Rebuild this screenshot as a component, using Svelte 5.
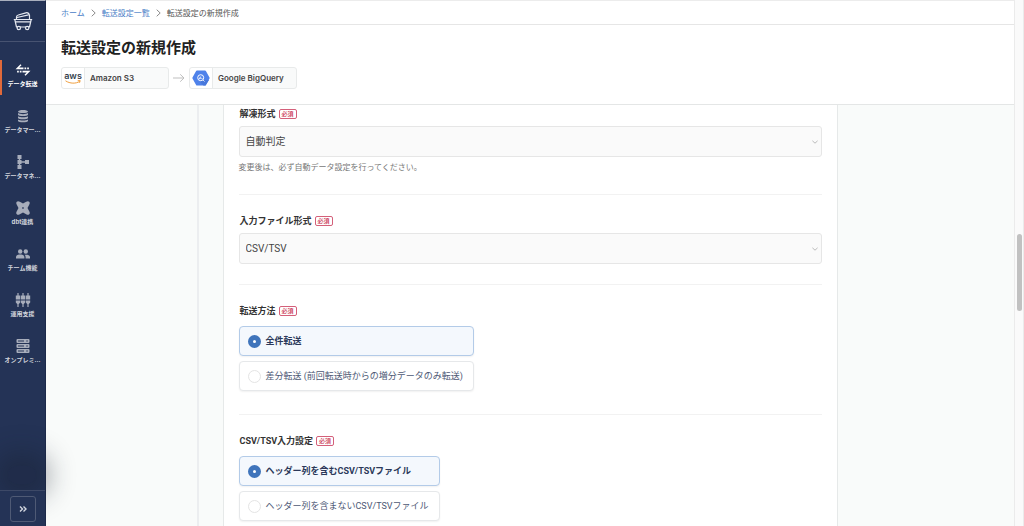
<script lang="ts">
	const navItems = [
		{ id: "transfer", label: "データ転送" },
		{ id: "mart", label: "データマート" },
		{ id: "manage", label: "データマネジメント" },
		{ id: "dbt", label: "dbt連携" },
		{ id: "team", label: "チーム機能" },
		{ id: "ops", label: "運用支援" },
		{ id: "onprem", label: "オンプレミス" },
	];

	const transferModes = [
		{ value: "full", label: "全件転送" },
		{ value: "diff", label: "差分転送 (前回転送時からの増分データのみ転送)" },
	];

	const headerModes = [
		{ value: "with", label: "ヘッダー列を含むCSV/TSVファイル" },
		{ value: "without", label: "ヘッダー列を含まないCSV/TSVファイル" },
	];

	let current = $state("transfer");
	let unzip = $state("自動判定");
	let fileType = $state("CSV/TSV");
	let transferMode = $state("full");
	let headerMode = $state("with");

	const scroll = { top: 44.5, size: 14.6 };

	// long labels are cut to five characters
	const shorten = (text: string) => (text.length > 5 && !text.startsWith("dbt") ? text.slice(0, 5) + "..." : text);
</script>

{#snippet required()}
	<span class="required">必須</span>
{/snippet}

{#snippet chevron()}
	<svg class="chevron" viewBox="0 0 8 8" aria-hidden="true"><path d="M1.4 2.8 4 5.2l2.6-2.4" /></svg>
{/snippet}

{#snippet crumb()}
	<svg class="crumb" viewBox="0 0 5 8" aria-hidden="true"><path d="M.7.7 4.2 4 .7 7.3" /></svg>
{/snippet}

<div class="app">
	<aside class="sidebar">
		<a class="logo" href="#home" aria-label="ホーム">
			<svg viewBox="0 0 20 20" fill="none" stroke="#e6e9f0" stroke-width="1.2" stroke-linejoin="round">
				<path d="M.8 8.500h18.400M1.800 8.500 3.500 16h13l1.700-7.500M2.500 10.800h15" />
				<path d="M3.500 8.200V6c0-1 .8-1.800 1.800-2l7.500-2.200c2-.5 3.200.7 3.700 2.700v3.700M4 6.500l11.500-2.700" />
				<circle cx="5.800" cy="17" r="1.700" fill="#243356" />
				<circle cx="14.200" cy="17" r="1.700" fill="#243356" />
			</svg>
		</a>

		<nav>
			{#each navItems as item (item.id)}
				<a class="item" class:active={current === item.id} href="#{item.id}" title={item.label} onclick={() => (current = item.id)}>
					<svg viewBox="0 0 16 14" fill="currentColor">
						{#if item.id === "transfer"}
							<path d="M.5 6.200 5.500 1.200l1 1L4.200 4.600h4.300v1.600zM9.500 4.600h1.700v1.600H9.500zM12.200 4.600h1.700v1.600h-1.700zM15.500 7.800l-5 5-1-1 2.300-2.400H7.500V7.800zM4.800 7.800h1.700v1.600H4.800zM2.100 7.800h1.700v1.600H2.100z" />
						{:else if item.id === "mart"}
							<path d="M3 2.500C3 .4 13 .4 13 2.500S3 4.600 3 2.500zM3 4c2 1.500 8 1.500 10 0v1.700c0 1.700-10 1.700-10 0zM3 7.200c2 1.500 8 1.500 10 0v1.700c0 1.700-10 1.700-10 0zM3 10.400c2 1.500 8 1.500 10 0v1.500c0 1.900-10 1.900-10 0z" />
						{:else if item.id === "manage"}
							<path d="M2.500 0h4v4H5.200v1h1.300v1.300H10V5h4v4h-4V7.700H6.500V9H5.200v1h1.300v4h-4v-4h1.300V9H2.500V5h1.300V4H2.500z" />
						{:else if item.id === "dbt"}
							<path fill-rule="evenodd" d="M1.800.7C2.700-.2 3.800.1 4.800.7L8 2.500 11.200.7c1-.6 2.100-.9 3 0s.6 2 0 3L12.500 7l1.700 3.300c.6 1 .9 2.100 0 3s-2 .6-3 0L8 11.500l-3.200 1.800c-1 .6-2.100.9-3 0s-.6-2 0-3L3.500 7 1.800 3.700c-.6-1-.9-2.100 0-3zM8 5.900 6.900 7 8 8.100 9.100 7z" />
						{:else if item.id === "team"}
							<circle cx="5.200" cy="4.500" r="2.200" />
							<circle cx="10.800" cy="4.500" r="2.200" />
							<path d="M1 11.500V10c0-1.800 2.500-2.400 4.200-2.400S9.400 8.200 9.400 10v1.500zM10.600 11.500V10c0-.9-.4-1.600-1-2.200 2.200-.5 5.400.2 5.400 2.200v1.500z" />
						{:else if item.id === "ops"}
							{#each [3, 8, 13] as x}
								<path transform="translate({x} 0)" d="M-.6 0H.6v2.500h1.600v4h-4.400v-4h1.600zM-2.200 7.500h4.400v2L.6 11.300V14H-.6v-2.700l-1.600-1.800z" />
							{/each}
						{:else}
							{#each [0, 5, 10] as y}
								<path transform="translate(0 {y})" fill-rule="evenodd" d="M2.500 0h11a1 1 0 0 1 1 1v2a1 1 0 0 1-1 1h-11a1 1 0 0 1-1-1V1a1 1 0 0 1 1-1zM3 1.400v1.200h6V1.400zM11.300 1.400v1.200h1.500V1.400z" />
							{/each}
						{/if}
					</svg>
					<span>{shorten(item.label)}</span>
				</a>
			{/each}
		</nav>

		<div class="glow"></div>

		<div class="foot">
			<button type="button" aria-label="メニューを開く">
				<svg viewBox="0 0 8 8" fill="none" stroke="#d3d7e0" stroke-width="1.400"><path d="M1 1.500 3.500 4 1 6.500M4.500 1.500 7 4 4.500 6.500" /></svg>
			</button>
		</div>
	</aside>

	<main>
		<header>
			<div class="crumbs">
				<a href="#home">ホーム</a>
				{@render crumb()}
				<a href="#list">転送設定一覧</a>
				{@render crumb()}
				<span>転送設定の新規作成</span>
			</div>

			<div class="heading">
				<h1>転送設定の新規作成</h1>
				<div class="route">
					<div class="chip">
						<div class="brand">
							<svg class="aws" viewBox="0 0 18 14">
								<text x="9" y="8">aws</text>
								<path d="M1.500 9.800c4.500 3 10.500 3 14.200.6M13.700 9.700l2.500-.1-.7 2.200" fill="none" stroke="#f0a040" stroke-width="1" />
							</svg>
						</div>
						<span>Amazon S3</span>
					</div>
					<svg class="arrow" viewBox="0 0 12 10" fill="none" stroke="#bfbfbf"><path d="M0 5h11M7.200 1.300 11 5 7.200 8.700" /></svg>
					<div class="chip">
						<div class="brand">
							<svg class="bq" viewBox="0 0 18 16">
								<path d="M5 .5h8a1 1 0 0 1 .9.500l3.600 6.500a1 1 0 0 1 0 1L13.900 15a1 1 0 0 1-.9.500H5a1 1 0 0 1-.9-.5L.5 8.500a1 1 0 0 1 0-1L4.100 1A1 1 0 0 1 5 .5z" fill="#4f82ea" />
								<path d="m11 10 6 0-3.100 5a1 1 0 0 1-.9.500h-1.500L8 12z" fill="#4878dc" />
								<circle cx="8.700" cy="7.700" r="3" fill="none" stroke="#fff" />
								<path d="m11 10 1.500 1.500M7.500 7.500V9M8.700 6.500V9M9.900 8v1" fill="none" stroke="#fff" stroke-width=".8" />
							</svg>
						</div>
						<span>Google BigQuery</span>
					</div>
				</div>
			</div>
		</header>

		<div class="body">
			<div class="steps"></div>

			<form class="panel">
				<section>
					<div class="title"><label for="unzip">解凍形式</label>{@render required()}</div>
					<div class="select">
						<select id="unzip" bind:value={unzip}>
							<option>自動判定</option>
						</select>
						{@render chevron()}
					</div>
					<p class="help">変更後は、必ず自動データ設定を行ってください。</p>
				</section>

				<section>
					<div class="title"><label for="file-type">入力ファイル形式</label>{@render required()}</div>
					<div class="select">
						<select id="file-type" bind:value={fileType}>
							<option>CSV/TSV</option>
						</select>
						{@render chevron()}
					</div>
				</section>

				<section>
					<div class="title" id="mode-title">転送方法{@render required()}</div>
					<div class="radios" role="radiogroup" aria-labelledby="mode-title">
						{#each transferModes as mode}
							<label class="radio">
								<input type="radio" name="mode" value={mode.value} bind:group={transferMode}>
								<span>{mode.label}</span>
							</label>
						{/each}
					</div>
				</section>

				<section>
					<div class="title" id="header-title">CSV/TSV入力設定{@render required()}</div>
					<div class="radios" role="radiogroup" aria-labelledby="header-title">
						{#each headerModes as mode}
							<label class="radio">
								<input type="radio" name="header" value={mode.value} bind:group={headerMode}>
								<span>{mode.label}</span>
							</label>
						{/each}
					</div>
				</section>
			</form>
		</div>
	</main>

	<div class="scrollbar">
		<div class="thumb" style="top: {scroll.top}%; height: {scroll.size}%"></div>
	</div>
</div>

<style>
	:global(body) {
		background: #f9fbfa;
	}

	.app {
		display: grid;
		grid-template-columns: 46px minmax(0, 1fr) 10px;
		height: 100vh;
		overflow: hidden;
		font: 9px/12px Inter, "Noto Sans CJK JP", sans-serif;
		color: #333;
	}

	.app :global(*) {
		box-sizing: border-box;
	}

	a {
		text-decoration: none;
	}

	svg {
		display: block;
	}

	/* sidebar */
	.sidebar {
		position: relative;
		z-index: 1;
		display: flex;
		flex-direction: column;
		background: #243356;
		border-top: 1px solid #a9afbd;
		border-right: 1px solid #1d2a4a;
	}

	.logo {
		display: flex;
		align-items: center;
		justify-content: center;
		height: 41px;
		border-bottom: 1px solid #475371;
	}

	.logo svg {
		width: 20px;
		height: 20px;
	}

	nav {
		flex: 1;
		display: flex;
		flex-direction: column;
		gap: 11px;
		padding-top: 18px;
	}

	.item {
		display: flex;
		flex-direction: column;
		align-items: center;
		gap: 3px;
		padding: 3px 0 7px;
		border-left: 2px solid transparent;
		border-right: 2px solid transparent;
		color: #a7adbb;
	}

	.item.active {
		border-left-color: #e0693a;
		color: #fff;
	}

	.item svg {
		width: 16px;
		height: 14px;
	}

	.item span {
		font-size: 6px;
		line-height: 8px;
		font-weight: 700;
		white-space: nowrap;
		color: #d3d6dd;
	}

	.item.active span {
		color: #fff;
	}

	.glow {
		position: absolute;
		left: 8px;
		bottom: 42px;
		width: 28px;
		height: 18px;
		border-radius: 9px;
		background: rgba(27, 36, 58, 0.4);
		box-shadow: 0 0 28px 12px rgba(24, 30, 44, 0.45);
	}

	.foot {
		position: relative;
		padding: 5px 10px 4px;
		background: #243356;
		border-top: 1px solid #3d4967;
	}

	.foot button {
		display: flex;
		align-items: center;
		justify-content: center;
		width: 26px;
		height: 26px;
		padding: 0;
		background: none;
		border: 1px solid #4f5a75;
		border-radius: 3px;
	}

	.foot svg {
		width: 8px;
		height: 8px;
	}

	/* header */
	main {
		display: flex;
		flex-direction: column;
		min-width: 0;
		min-height: 0;
	}

	header {
		background: #fff;
		border-bottom: 1px solid #e4e6e6;
	}

	.crumbs {
		display: flex;
		align-items: center;
		gap: 6px;
		height: 25px;
		padding-left: 15px;
		border-top: 1px solid #ececec;
		border-bottom: 1px solid #e6e6e6;
		font-size: 8px;
		color: #555;
	}

	.crumbs a {
		color: #4a80c7;
	}

	.crumb {
		width: 5px;
		height: 8px;
		fill: none;
		stroke: #8a8a8a;
	}

	.heading {
		padding: 13px 15px 15px;
	}

	h1 {
		margin: 0 0 9px;
		font-size: 15px;
		line-height: 20px;
		font-weight: 700;
		color: #222;
	}

	.route {
		display: flex;
		align-items: center;
		gap: 4px;
	}

	.chip {
		display: flex;
		align-items: center;
		width: 108px;
		height: 22px;
		background: #f9fafa;
		border: 1px solid #e8eaea;
		border-radius: 3px;
		font-size: 8px;
		font-weight: 600;
		color: #444;
	}

	.brand {
		display: flex;
		align-items: center;
		justify-content: center;
		width: 23px;
		height: 100%;
		background: #fff;
		border-right: 1px solid #e8eaea;
		border-radius: 3px 0 0 3px;
	}

	.chip span {
		padding-left: 5px;
	}

	.aws {
		width: 18px;
		height: 14px;
	}

	.aws text {
		font: 600 9px Inter, sans-serif;
		text-anchor: middle;
		fill: #343e4d;
	}

	.bq {
		width: 18px;
		height: 16px;
	}

	.arrow {
		width: 12px;
		height: 10px;
	}

	/* form */
	.body {
		flex: 1;
		display: grid;
		grid-template-columns: 1fr minmax(0, 615px) 1fr;
		min-height: 0;
		background: #f9fbfa;
	}

	.steps {
		margin-right: 24px;
		border-right: 2px solid #eceef0;
	}

	.panel {
		padding: 0 15px;
		background: #fff;
		border: solid #e6e9e9;
		border-width: 0 1px;
		font-family: Roboto, "Noto Sans CJK JP", sans-serif;
	}

	section {
		padding: 20px 0;
		border-bottom: 1px solid #f2f2f2;
	}

	section:first-child {
		padding-top: 3px;
	}

	section:last-child {
		border-bottom: none;
	}

	.title {
		display: flex;
		align-items: center;
		gap: 3px;
		height: 12px;
		margin-bottom: 6px;
		padding-left: 1px;
		font-weight: 700;
	}

	.required {
		padding: 0 2px;
		border: 1px solid #d4607a;
		border-radius: 2px;
		font-size: 6px;
		line-height: 8px;
		font-weight: 500;
		color: #c9304f;
	}

	.select {
		position: relative;
	}

	select {
		display: block;
		appearance: none;
		width: 100%;
		height: 31px;
		padding: 0 20px 0 6px;
		background: #fafafa;
		border: 1px solid #e6e6e6;
		border-radius: 3px;
		font: inherit;
		font-size: 10px;
		color: #444;
	}

	.chevron {
		position: absolute;
		right: 3px;
		top: 12px;
		width: 8px;
		height: 8px;
		fill: none;
		stroke: #bbb;
		pointer-events: none;
	}

	.help {
		margin: 5px 0 0;
		font-size: 8px;
		color: #777;
	}

	.radios {
		display: inline-flex;
		flex-direction: column;
		gap: 5px;
		padding: 3px 0;
		vertical-align: top;
	}

	.radio {
		display: flex;
		align-items: center;
		gap: 5px;
		height: 30px;
		padding: 0 10px 0 8px;
		background: #fff;
		border: 1px solid #e6e8ea;
		border-radius: 4px;
		box-shadow: 0 1px 2px rgba(0, 0, 0, 0.06);
		color: #4d5875;
	}

	.radio:has(input:checked) {
		background: #f4f8fd;
		border-color: #b3cbe8;
		font-weight: 700;
		color: #2b3859;
	}

	.radio input {
		appearance: none;
		width: 13px;
		height: 13px;
		margin: 0;
		border: 1px solid #e4e4e4;
		border-radius: 50%;
		background: #fff;
	}

	.radio input:checked {
		border: 5px solid #3f74bb;
	}

	/* scrollbar track */
	.scrollbar {
		position: relative;
		background: #fafafa;
		border: solid #ebebeb;
		border-width: 0 1px;
	}

	.thumb {
		position: absolute;
		right: 1px;
		width: 5px;
		border-radius: 3px;
		background: #c1c1c1;
	}
</style>
